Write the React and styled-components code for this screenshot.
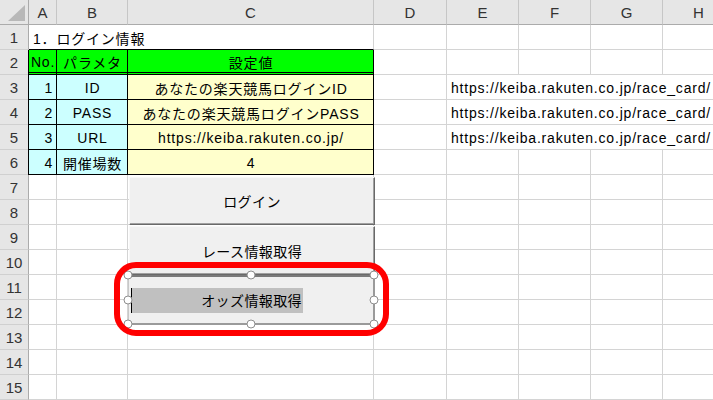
import React from "react";
import styled, { createGlobalStyle } from "styled-components";

const GlobalStyle = createGlobalStyle`
  html, body { margin: 0; padding: 0; background: #ffffff; }
  body { width: 713px; height: 400px; overflow: hidden; }
`;

const URL_CARD = "https://keiba.rakuten.co.jp/race_card/";
const COLS = ["A", "B", "C", "D", "E", "F", "G", "H"];

// table body rows 3..6 (A, B, C)
const params = [
  { no: "1", name: "ID", value: "あなたの楽天競馬ログインID", link: true },
  { no: "2", name: "PASS", value: "あなたの楽天競馬ログインPASS", link: true },
  { no: "3", name: "URL", value: "https://keiba.rakuten.co.jp/", link: true },
  { no: "4", name: "開催場数", value: "4", link: false }
];

const fills = { green: "#00ff00", cyan: "#ccffff", yellow: "#ffffcc" };

const Sheet = styled.div`
  display: grid;
  grid-template-columns: 29px 28px 71px 246px 73px 72px 72px 72px 72px;
  grid-template-rows: repeat(16, 25px);
  width: 713px;
  height: 400px;
  overflow: hidden;
  font-family: "Liberation Sans", "Noto Sans CJK JP", sans-serif;
  font-size: 14px;
  color: #000;
`;

const Corner = styled.div`
  grid-row: 1;
  grid-column: 1;
  background: #e6e6e6;
  border-right: 1px solid #ababab;
  border-bottom: 1px solid #ababab;
  box-sizing: border-box;
  svg { display: block; }
`;

const ColHead = styled.div`
  grid-row: 1;
  grid-column: ${p => p.$col};
  background: #e6e6e6;
  border-right: 1px solid #c6c6c6;
  border-bottom: 1px solid #ababab;
  box-sizing: border-box;
  display: flex;
  align-items: center;
  justify-content: center;
  color: #333;
  font-size: 15px;
`;

const RowHead = styled.div`
  grid-row: ${p => p.$row};
  grid-column: 1;
  background: #e6e6e6;
  border-right: 1px solid #ababab;
  border-bottom: 1px solid #d0d0d0;
  box-sizing: border-box;
  display: flex;
  align-items: center;
  justify-content: center;
  color: #333;
  font-size: 15px;
`;

const Cell = styled.div`
  grid-row: ${p => p.$row};
  grid-column: ${p => p.$col} / span ${p => p.$span || 1};
  box-sizing: border-box;
  background: ${p => (p.$fill ? fills[p.$fill] : "transparent")};
  border-right: 1px solid ${p => (p.$boxed ? "#000" : "#d4d4d4")};
  border-bottom: ${p =>
    p.$double ? "3px double #000" : `1px solid ${p.$boxed || p.$topEdge ? "#000" : "#d4d4d4"}`};
  box-shadow: ${p => (p.$leftEdge ? "-1px 0 0 #000" : "none")};
  display: flex;
  align-items: center;
  justify-content: ${p =>
    p.$align === "right" ? "flex-end" : p.$align === "left" ? "flex-start" : "center"};
  padding: 1px 3px 0 4px;
  letter-spacing: 0.8px;
  white-space: nowrap;
  overflow: hidden;
`;

const FormButton = styled.div`
  grid-column: 4;
  grid-row: ${p => p.$row} / span 2;
  margin: ${p => p.$top || 0}px -1px 0 ${p => (p.$selected ? 0 : 1)}px;
  position: relative;
  z-index: 2;
  box-sizing: border-box;
  background: #f0f0f0;
  border-style: solid;
  border-width: ${p => (p.$selected ? "2px 2px 2px 1px" : "1px")};
  border-color: ${p =>
    p.$selected
      ? "#7a7a7a #9a9a9a #9a9a9a #c8c8c8"
      : "#f8f8f8 #696969 #696969 #f8f8f8"};
  box-shadow: ${p => (p.$selected ? "none" : "inset -1px -1px 0 #a0a0a0")};
  display: flex;
  align-items: center;
  justify-content: ${p => (p.$selected ? "flex-start" : "center")};
  font-family: "Noto Sans CJK JP", sans-serif;
  font-size: 14px;
  letter-spacing: 0.4px;
`;

const Highlight = styled.span`
  margin-left: 2px;
  width: 172px;
  height: 25px;
  box-sizing: border-box;
  background: #c0c0c0;
  border-left: 1px solid #000;
  display: flex;
  align-items: center;
  justify-content: flex-end;
  padding-right: 1px;
`;

const Handle = styled.span`
  position: absolute;
  left: calc(${p => p.$x}% + ${p => (p.$x === 0 ? -1 : p.$x === 100 ? 1 : 0)}px);
  top: calc(${p => p.$y}% + ${p => (p.$y === 0 ? -2 : p.$y === 100 ? 1 : 0)}px);
  width: 9px;
  height: 9px;
  transform: translate(-50%, -50%);
  border-radius: 50%;
  background: #ffffff;
  border: 1.5px solid #8e8e8e;
  box-sizing: border-box;
`;

const RedRing = styled.span`
  position: absolute;
  top: -15px;
  left: -15px;
  right: -16px;
  bottom: -13px;
  border: 6px solid #ff0000;
  border-radius: 22px;
  pointer-events: none;
`;

const handles = [
  [0, 0], [50, 0], [100, 0],
  [0, 50], [100, 50],
  [0, 100], [50, 100], [100, 100]
];

const emptyRow = (r, from) =>
  Array.from({ length: 9 - from }, (_, i) => (
    <Cell key={`r${r}c${from + i}`} $row={r + 1} $col={from + i + 1} />
  ));

const App = () => {
  return (
    <>
      <GlobalStyle />
      <Sheet>
        <Corner>
          <svg width="28" height="24" viewBox="0 0 28 24">
            <polygon points="8,21 25,21 25,5" fill="#b8b8b8" />
          </svg>
        </Corner>
        {COLS.map((c, i) => (
          <ColHead key={c} $col={i + 2}>
            {c}
          </ColHead>
        ))}
        {Array.from({ length: 15 }, (_, i) => (
          <RowHead key={i} $row={i + 2}>
            {i + 1}
          </RowHead>
        ))}

        {/* row 1 */}
        <Cell $row={2} $col={2} $span={3} $align="left" $topEdge>
          1．ログイン情報
        </Cell>
        {emptyRow(1, 4)}

        {/* row 2 - header of the table */}
        <Cell $row={3} $col={2} $fill="green" $boxed $double $leftEdge>
          No.
        </Cell>
        <Cell $row={3} $col={3} $fill="green" $boxed $double>
          パラメタ
        </Cell>
        <Cell $row={3} $col={4} $fill="green" $boxed $double>
          設定値
        </Cell>
        {emptyRow(2, 4)}

        {params.map((p, i) => {
          const r = i + 4;
          return (
            <React.Fragment key={p.no}>
              <Cell $row={r} $col={2} $fill="cyan" $boxed $leftEdge $align="right">
                {p.no}
              </Cell>
              <Cell $row={r} $col={3} $fill="cyan" $boxed>
                {p.name}
              </Cell>
              <Cell $row={r} $col={4} $fill="yellow" $boxed>
                {p.value}
              </Cell>
              <Cell $row={r} $col={5} />
              {p.link ? (
                <Cell $row={r} $col={6} $span={4} $align="left">
                  {URL_CARD}
                </Cell>
              ) : (
                emptyRow(r - 1, 5)
              )}
            </React.Fragment>
          );
        })}

        {Array.from({ length: 9 }, (_, i) => emptyRow(i + 7, 1))}

        <FormButton $row={8} $top={2}>ログイン</FormButton>
        <FormButton $row={10} $top={1}>レース情報取得</FormButton>
        <FormButton $row={12} $selected>
          <Highlight>オッズ情報取得</Highlight>
          {handles.map(([x, y]) => (
            <Handle key={`${x}-${y}`} $x={x} $y={y} />
          ))}
          <RedRing />
        </FormButton>
      </Sheet>
    </>
  );
};

export default App;
